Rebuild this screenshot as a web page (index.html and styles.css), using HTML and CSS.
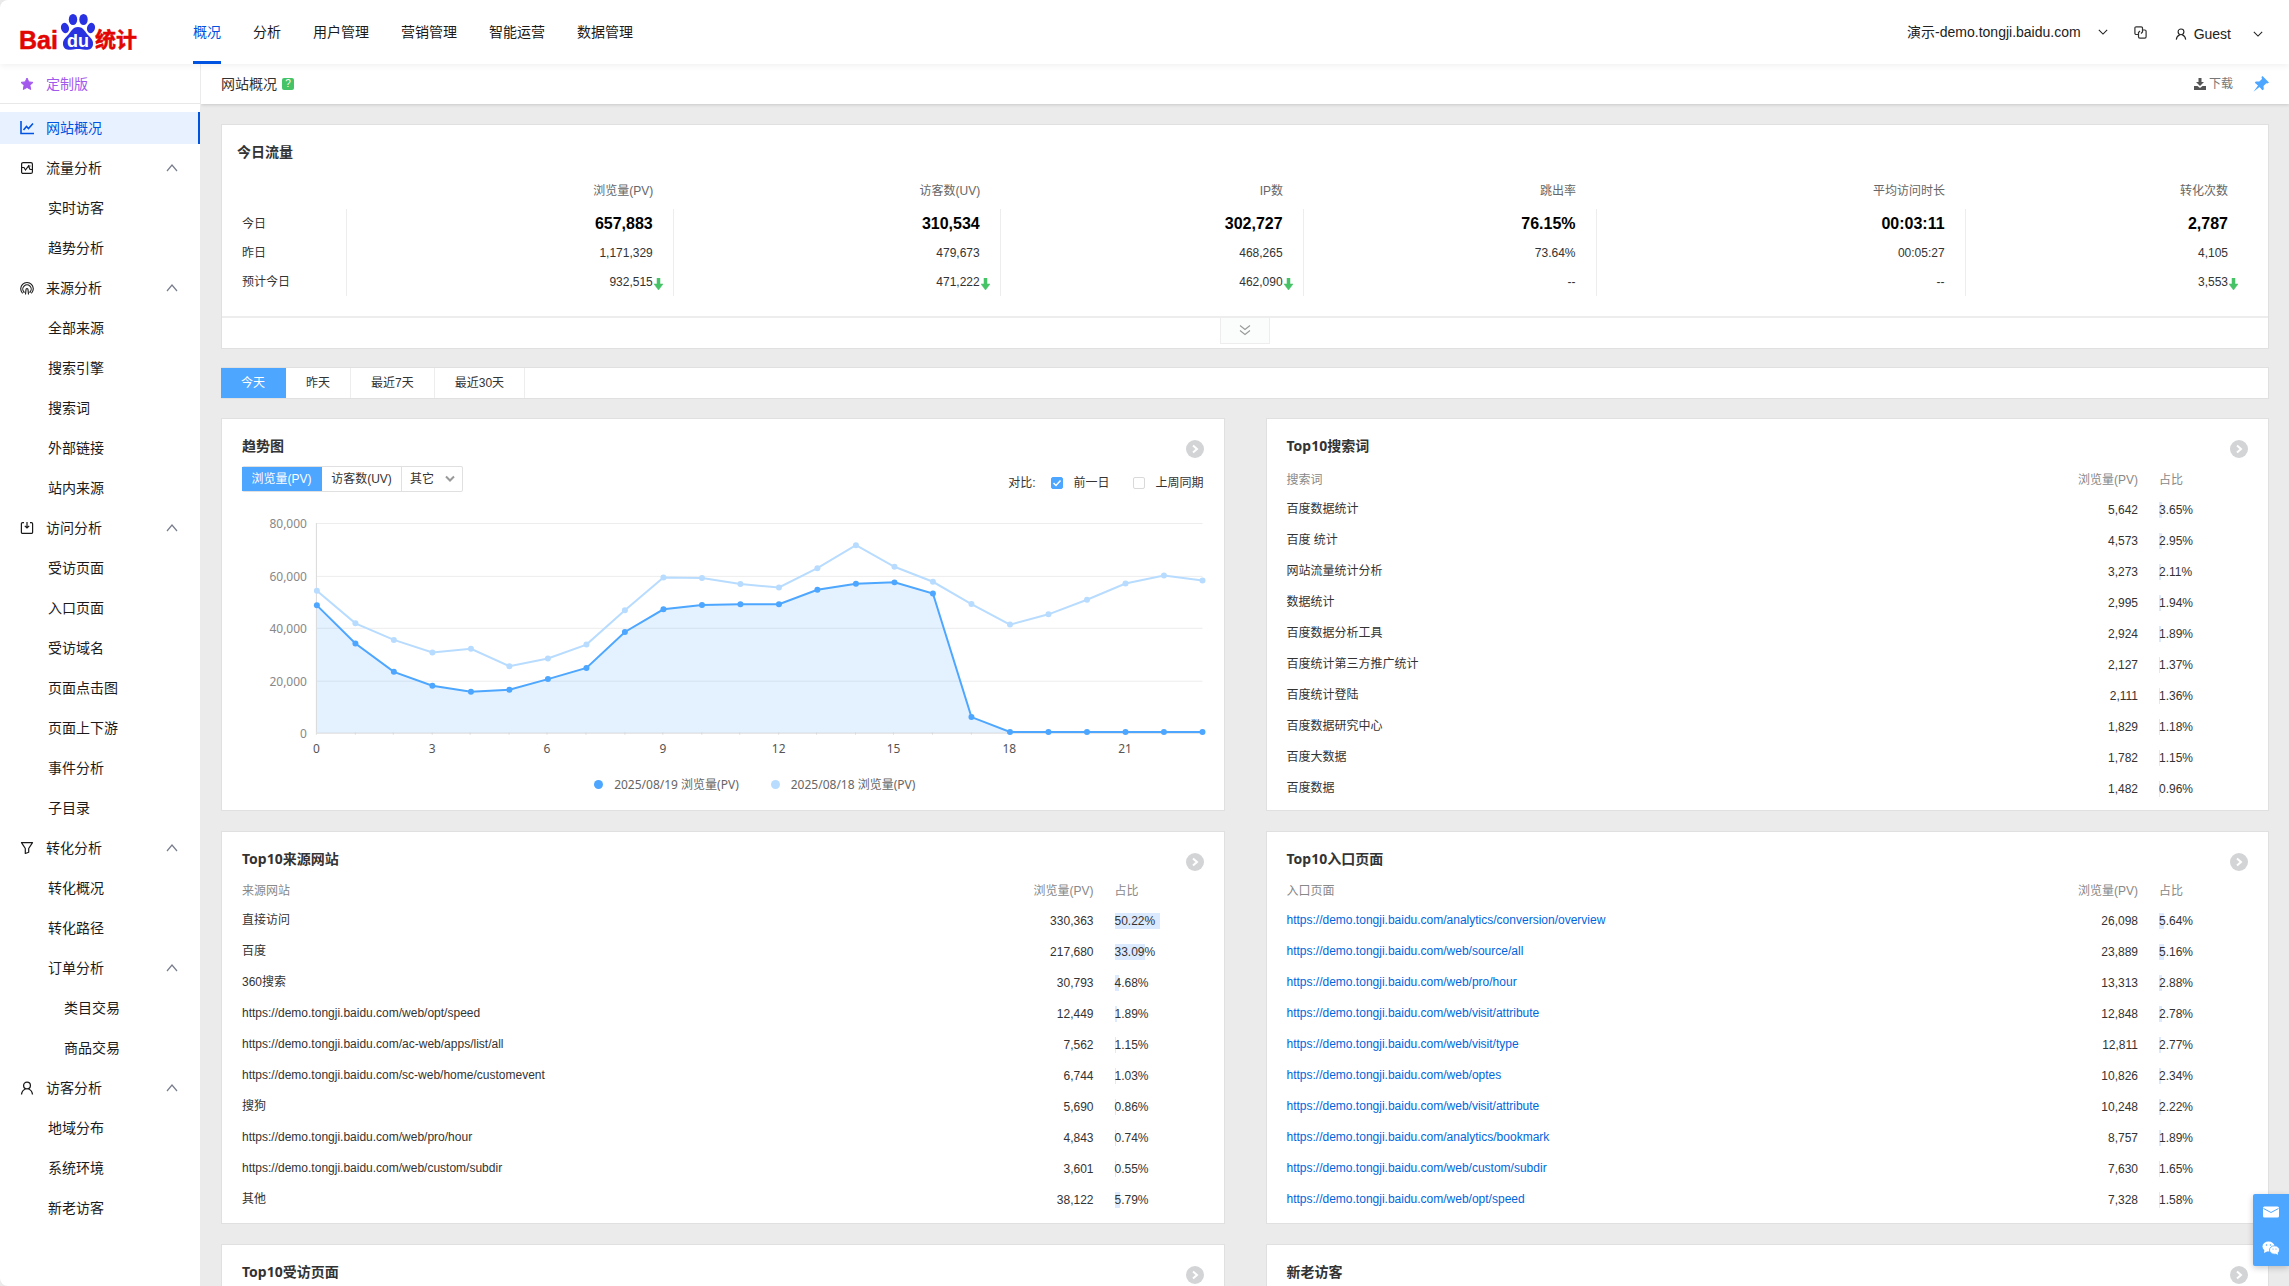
FILE: index.html
```html
<!DOCTYPE html>
<html lang="zh-CN">
<head>
  <meta charset="UTF-8">
  <meta name="viewport" content="width=device-width, initial-scale=1.0">
  <title>网站概况 - 百度统计</title>
  <link rel="stylesheet" href="styles.css">
</head>
<body>
  <!-- shared icons -->
  <svg class="sprite" aria-hidden="true">
    <symbol id="up" viewBox="0 0 12 12"><path d="M1 9l5-6 5 6" fill="none" stroke="currentColor" stroke-width="1.2"/></symbol>
    <symbol id="down" viewBox="0 0 12 12"><path d="M1 3.5l5 5 5-5" fill="none" stroke="currentColor" stroke-width="1.3"/></symbol>
    <symbol id="drop" viewBox="0 0 9 12"><path d="M3 0h3v6h3L4.500 12 0 6h3z" fill="#46c367" stroke="#46c367" stroke-linejoin="round" stroke-width=".5"/></symbol>
    <symbol id="user" viewBox="0 0 14 14"><g fill="none" stroke="currentColor" stroke-width="1.3"><circle cx="7" cy="4.500" r="3.400"/><path d="M1.500 13.500c.3-3 1.800-4.700 4-5.500M12.500 13.500c-.3-3-1.800-4.700-4-5.500"/></g></symbol>
    <symbol id="more" viewBox="0 0 18 18"><circle cx="9" cy="9" r="9" fill="#d3d4d6"/><path d="M7 5.500L11 9l-4 3.500" fill="none" stroke="#fff" stroke-width="2"/></symbol>
  </svg>

  <header class="header">
    <a class="logo" href="#" aria-label="百度统计">
      <svg viewBox="0 0 120 40" width="120" height="40">
        <text class="logo-red logo-bai" x="-1" y="37">Bai</text>
        <g fill="#2932e1">
          <ellipse cx="53" cy="7.500" rx="4.200" ry="5.500"/>
          <ellipse cx="63.500" cy="7.500" rx="4.200" ry="5.500"/>
          <ellipse cx="45" cy="16" rx="4" ry="5.200" transform="rotate(-15 45 16)"/>
          <ellipse cx="71" cy="16" rx="4" ry="5.200" transform="rotate(15 71 16)"/>
          <path d="M58 15c5.500 0 7 5 10.500 8.500 3 3 5 5.500 4.500 9-.6 4.500-4 5.500-8 5.200-3-.4-4.500-.7-7-.7s-4 .3-7 .7c-4 .3-7.400-.7-8-5.200-.5-3.500 1.500-6 4.500-9C51 20 52.500 15 58 15z"/>
        </g>
        <text class="logo-du" x="47" y="35">du</text>
        <text class="logo-red logo-cn" x="75" y="35">统计</text>
      </svg>
    </a>
    <nav class="nav">
      <a class="active" href="#">概况</a>
      <a href="#">分析</a>
      <a href="#">用户管理</a>
      <a href="#">营销管理</a>
      <a href="#">智能运营</a>
      <a href="#">数据管理</a>
    </nav>
    <div class="account">
      <button class="site" type="button">演示-demo.tongji.baidu.com <svg width="10" height="10"><use href="#down"/></svg></button>
      <button class="copy" type="button" aria-label="复制">
        <svg viewBox="0 0 13 13" width="13" height="13"><g fill="none" stroke="#333" stroke-width="1.200"><path d="M5 8.500H2.200A1.300 1.300 0 0 1 .9 7.200V2.100A1.300 1.300 0 0 1 2.200.8h5a1.300 1.300 0 0 1 1.300 1.300V6L7 7.500"/><path d="M8.500 4h2.300a1.300 1.300 0 0 1 1.300 1.300v5.500a1.300 1.300 0 0 1-1.300 1.300h-5a1.300 1.300 0 0 1-1.300-1.300V6.500L6 5"/></g></svg>
      </button>
      <button class="guest" type="button"><svg width="12" height="12"><use href="#user"/></svg><span>Guest</span><svg width="10" height="10"><use href="#down"/></svg></button>
    </div>
  </header>

  <div class="layout">
    <aside class="sidebar">
      <a class="custom" href="#">
        <svg viewBox="0 0 14 14" width="14" height="14"><path d="M7 1l1.800 3.900 4.200.5-3.100 2.900.8 4.200L7 10.400l-3.700 2.100.8-4.200L1 5.400l4.200-.5z" fill="#a259ec" stroke="#a259ec" stroke-linejoin="round"/></svg>
        定制版
      </a>
      <nav class="menu">
        <a class="item selected" href="#">
          <svg viewBox="0 0 14 14" width="14" height="14"><path d="M1 0v12.500h13M3.500 9l3-3.500 2 2 4.500-5" fill="none" stroke="currentColor" stroke-width="1.600"/></svg>
          网站概况
        </a>
        <a class="item" href="#">
          <svg viewBox="0 0 14 14" width="14" height="14"><g fill="none" stroke="currentColor" stroke-width="1.200"><rect x="1.600" y="1.600" width="10.800" height="10.800" rx="1.500"/><path d="M2 6.500h2L5.500 9l3-4 1.500 3.500h2"/><path d="M8 5h2.500"/></g></svg>
          流量分析 <svg class="fold" width="12" height="12"><use href="#up"/></svg>
        </a>
        <a class="item sub" href="#">实时访客</a>
        <a class="item sub" href="#">趋势分析</a>
        <a class="item" href="#">
          <svg viewBox="0 0 14 14" width="14" height="14"><g fill="none" stroke="currentColor" stroke-width="1.100"><path d="M2.600 12.300A6.300 6.300 0 1 1 11.400 12.300"/><path d="M4 12V11A4.200 4.200 0 1 1 10 11V12"/><path d="M5.500 13.500L6 8.500a1 1 0 0 1 2 0l.5 5"/></g></svg>
          来源分析 <svg class="fold" width="12" height="12"><use href="#up"/></svg>
        </a>
        <a class="item sub" href="#">全部来源</a>
        <a class="item sub" href="#">搜索引擎</a>
        <a class="item sub" href="#">搜索词</a>
        <a class="item sub" href="#">外部链接</a>
        <a class="item sub" href="#">站内来源</a>
        <a class="item" href="#">
          <svg viewBox="0 0 14 14" width="14" height="14"><g fill="none" stroke="currentColor" stroke-width="1.200"><path d="M4 1.600H2.600a1.200 1.200 0 0 0-1.200 1.200v8.400a1.200 1.200 0 0 0 1.200 1.200h8.800a1.200 1.200 0 0 0 1.200-1.200V2.800a1.200 1.200 0 0 0-1.200-1.200H10"/><path d="M7 1v6M4.800 4.800L7 7l2.200-2.200"/></g></svg>
          访问分析 <svg class="fold" width="12" height="12"><use href="#up"/></svg>
        </a>
        <a class="item sub" href="#">受访页面</a>
        <a class="item sub" href="#">入口页面</a>
        <a class="item sub" href="#">受访域名</a>
        <a class="item sub" href="#">页面点击图</a>
        <a class="item sub" href="#">页面上下游</a>
        <a class="item sub" href="#">事件分析</a>
        <a class="item sub" href="#">子目录</a>
        <a class="item" href="#">
          <svg viewBox="0 0 14 14" width="14" height="14"><path d="M1.500 1.600h11L8.700 7.500v3.800l-3.400 1.200v-5z" fill="none" stroke="currentColor" stroke-width="1.200" stroke-linejoin="round"/></svg>
          转化分析 <svg class="fold" width="12" height="12"><use href="#up"/></svg>
        </a>
        <a class="item sub" href="#">转化概况</a>
        <a class="item sub" href="#">转化路径</a>
        <a class="item sub" href="#">订单分析 <svg class="fold" width="12" height="12"><use href="#up"/></svg></a>
        <a class="item leaf" href="#">类目交易</a>
        <a class="item leaf" href="#">商品交易</a>
        <a class="item" href="#">
          <svg width="14" height="14"><use href="#user"/></svg>
          访客分析 <svg class="fold" width="12" height="12"><use href="#up"/></svg>
        </a>
        <a class="item sub" href="#">地域分布</a>
        <a class="item sub" href="#">系统环境</a>
        <a class="item sub" href="#">新老访客</a>
      </nav>
    </aside>

    <main class="main">
      <div class="page-bar">
        <h1>网站概况</h1>
        <span class="help">?</span>
        <button class="download" type="button">
          <svg viewBox="0 0 12 12" width="12" height="12"><path d="M4.500 0h3v4H10L6 8 2 4h2.500zM0 8h3.500L6 10 8.500 8H12v4H0z" fill="#555"/></svg>下载
        </button>
        <button class="pin" type="button" aria-label="固定">
          <svg viewBox="0 0 16 16" width="16" height="16"><path d="M9.500 0L16 6.500l-1.700 1-1-.2L10.500 10l.3 3.200-1.400 1L6.500 11 .5 15.800 5 9.500 1.800 6.800l1-1.400L6.300 5.600 9 3 8.500 1z" fill="#4da6ff"/></svg>
        </button>
      </div>

      <div class="content">
        <section class="summary">
          <h2>今日流量</h2>
          <table class="totals">
            <thead>
              <tr><th></th><th>浏览量(PV)</th><th>访客数(UV)</th><th>IP数</th><th>跳出率</th><th>平均访问时长</th><th>转化次数</th></tr>
            </thead>
            <tbody>
              <tr class="today"><th>今日</th><td>657,883</td><td>310,534</td><td>302,727</td><td>76.15%</td><td>00:03:11</td><td>2,787</td></tr>
              <tr><th>昨日</th><td>1,171,329</td><td>479,673</td><td>468,265</td><td>73.64%</td><td>00:05:27</td><td>4,105</td></tr>
              <tr>
                <th>预计今日</th>
                <td>932,515<svg class="drop" width="9" height="12"><use href="#drop"/></svg></td>
                <td>471,222<svg class="drop" width="9" height="12"><use href="#drop"/></svg></td>
                <td>462,090<svg class="drop" width="9" height="12"><use href="#drop"/></svg></td>
                <td>--</td>
                <td>--</td>
                <td>3,553<svg class="drop" width="9" height="12"><use href="#drop"/></svg></td>
              </tr>
            </tbody>
          </table>
          <div class="expand">
            <button type="button" aria-label="展开">
              <svg viewBox="0 0 12 12" width="12" height="12"><path d="M1 1.500l5 4 5-4M1 6.500l5 4 5-4" fill="none" stroke="#999" stroke-width="1.100"/></svg>
            </button>
          </div>
        </section>

        <div class="range">
          <button class="active" type="button">今天</button>
          <button type="button">昨天</button>
          <button type="button">最近7天</button>
          <button type="button">最近30天</button>
        </div>

        <div class="cards">
          <section class="card">
            <div class="card-head"><h2>趋势图</h2><a href="#" aria-label="更多"><svg width="18" height="18"><use href="#more"/></svg></a></div>
            <div class="tools">
              <div class="metrics">
                <button class="active" type="button">浏览量(PV)</button>
                <button type="button">访客数(UV)</button>
                <label class="other">
                  <select aria-label="其它指标"><option>其它</option></select>
                  <svg viewBox="0 0 10 8" width="10" height="8"><path d="M1 1.500l4 4 4-4" fill="none" stroke="#999" stroke-width="2"/></svg>
                </label>
              </div>
              <div class="compare">
                <span>对比:</span>
                <label><input type="checkbox" checked>前一日</label>
                <label><input type="checkbox">上周同期</label>
              </div>
            </div>
            <svg class="chart" id="chart" viewBox="0 0 963 250"></svg>
            <ul class="legend">
              <li>2025/08/19 浏览量(PV)</li>
              <li class="previous">2025/08/18 浏览量(PV)</li>
            </ul>
          </section>

          <section class="card">
            <div class="card-head"><h2>Top10搜索词</h2><a href="#" aria-label="更多"><svg width="18" height="18"><use href="#more"/></svg></a></div>
            <table class="top words">
              <thead><tr><th>搜索词</th><th>浏览量(PV)</th><th>占比</th></tr></thead>
              <tbody>
                <tr><td>百度数据统计</td><td>5,642</td><td>3.65%</td></tr>
                <tr><td>百度 统计</td><td>4,573</td><td>2.95%</td></tr>
                <tr><td>网站流量统计分析</td><td>3,273</td><td>2.11%</td></tr>
                <tr><td>数据统计</td><td>2,995</td><td>1.94%</td></tr>
                <tr><td>百度数据分析工具</td><td>2,924</td><td>1.89%</td></tr>
                <tr><td>百度统计第三方推广统计</td><td>2,127</td><td>1.37%</td></tr>
                <tr><td>百度统计登陆</td><td>2,111</td><td>1.36%</td></tr>
                <tr><td>百度数据研究中心</td><td>1,829</td><td>1.18%</td></tr>
                <tr><td>百度大数据</td><td>1,782</td><td>1.15%</td></tr>
                <tr><td>百度数据</td><td>1,482</td><td>0.96%</td></tr>
              </tbody>
            </table>
          </section>

          <section class="card">
            <div class="card-head"><h2>Top10来源网站</h2><a href="#" aria-label="更多"><svg width="18" height="18"><use href="#more"/></svg></a></div>
            <table class="top">
              <thead><tr><th>来源网站</th><th>浏览量(PV)</th><th>占比</th></tr></thead>
              <tbody>
                <tr><td>直接访问</td><td>330,363</td><td>50.22%</td></tr>
                <tr><td>百度</td><td>217,680</td><td>33.09%</td></tr>
                <tr><td>360搜索</td><td>30,793</td><td>4.68%</td></tr>
                <tr><td>https://demo.tongji.baidu.com/web/opt/speed</td><td>12,449</td><td>1.89%</td></tr>
                <tr><td>https://demo.tongji.baidu.com/ac-web/apps/list/all</td><td>7,562</td><td>1.15%</td></tr>
                <tr><td>https://demo.tongji.baidu.com/sc-web/home/customevent</td><td>6,744</td><td>1.03%</td></tr>
                <tr><td>搜狗</td><td>5,690</td><td>0.86%</td></tr>
                <tr><td>https://demo.tongji.baidu.com/web/pro/hour</td><td>4,843</td><td>0.74%</td></tr>
                <tr><td>https://demo.tongji.baidu.com/web/custom/subdir</td><td>3,601</td><td>0.55%</td></tr>
                <tr><td>其他</td><td>38,122</td><td>5.79%</td></tr>
              </tbody>
            </table>
          </section>

          <section class="card">
            <div class="card-head"><h2>Top10入口页面</h2><a href="#" aria-label="更多"><svg width="18" height="18"><use href="#more"/></svg></a></div>
            <table class="top">
              <thead><tr><th>入口页面</th><th>浏览量(PV)</th><th>占比</th></tr></thead>
              <tbody>
                <tr><td><a href="#">https://demo.tongji.baidu.com/analytics/conversion/overview</a></td><td>26,098</td><td>5.64%</td></tr>
                <tr><td><a href="#">https://demo.tongji.baidu.com/web/source/all</a></td><td>23,889</td><td>5.16%</td></tr>
                <tr><td><a href="#">https://demo.tongji.baidu.com/web/pro/hour</a></td><td>13,313</td><td>2.88%</td></tr>
                <tr><td><a href="#">https://demo.tongji.baidu.com/web/visit/attribute</a></td><td>12,848</td><td>2.78%</td></tr>
                <tr><td><a href="#">https://demo.tongji.baidu.com/web/visit/type</a></td><td>12,811</td><td>2.77%</td></tr>
                <tr><td><a href="#">https://demo.tongji.baidu.com/web/optes</a></td><td>10,826</td><td>2.34%</td></tr>
                <tr><td><a href="#">https://demo.tongji.baidu.com/web/visit/attribute</a></td><td>10,248</td><td>2.22%</td></tr>
                <tr><td><a href="#">https://demo.tongji.baidu.com/analytics/bookmark</a></td><td>8,757</td><td>1.89%</td></tr>
                <tr><td><a href="#">https://demo.tongji.baidu.com/web/custom/subdir</a></td><td>7,630</td><td>1.65%</td></tr>
                <tr><td><a href="#">https://demo.tongji.baidu.com/web/opt/speed</a></td><td>7,328</td><td>1.58%</td></tr>
              </tbody>
            </table>
          </section>

          <section class="card">
            <div class="card-head"><h2>Top10受访页面</h2><a href="#" aria-label="更多"><svg width="18" height="18"><use href="#more"/></svg></a></div>
          </section>

          <section class="card">
            <div class="card-head"><h2>新老访客</h2><a href="#" aria-label="更多"><svg width="18" height="18"><use href="#more"/></svg></a></div>
          </section>
        </div>
      </div>
    </main>
  </div>

  <div class="contact">
    <button type="button" aria-label="邮件">
      <svg viewBox="0 0 16 12" width="16" height="12"><rect width="16" height="11" y=".5" rx="1.500" fill="#fff"/><path d="M.5 2.500L8 6.500l7.500-4" fill="none" stroke="#4da6ff"/></svg>
    </button>
    <button type="button" aria-label="微信">
      <svg viewBox="0 0 18 14" width="18" height="14"><g fill="#fff"><ellipse cx="6.500" cy="5.500" rx="6" ry="5"/><path d="M2.500 8L2 12l4-2z"/><ellipse cx="12.500" cy="9" rx="5" ry="4.200" stroke="#4da6ff" stroke-width=".8"/><path d="M13 12l3 2-.5-3z"/></g><g fill="#4da6ff"><circle cx="4.500" cy="4" r=".8"/><circle cx="8.500" cy="4" r=".8"/><circle cx="11" cy="8" r=".6"/><circle cx="14" cy="8" r=".6"/></g></svg>
    </button>
  </div>

  <script src="script.js"></script>
</body>
</html>
```
FILE: styles.css
```css
* {
  margin: 0;
  padding: 0;
  box-sizing: border-box;
}

body {
  display: flex;
  flex-direction: column;
  height: 100vh;
  overflow: hidden;
  background: #ebebeb;
  color: #333;
  font-family: "Liberation Sans", "Noto Sans CJK SC", sans-serif;
  font-size: 12px;
  line-height: 20px;
}

a {
  color: inherit;
  text-decoration: none;
}

button,
select {
  border: 0;
  background: none;
  color: inherit;
  font: inherit;
  cursor: pointer;
}

svg {
  flex: none;
}

.sprite {
  position: absolute;
  width: 0;
  height: 0;
}

/* header */
.header {
  display: flex;
  align-items: center;
  flex: none;
  height: 64px;
  padding: 0 26px 0 20px;
  background: #fff;
  border-radius: 8px 0 0;
  box-shadow: 0 2px 6px rgba(0, 0, 0, 0.06);
  z-index: 2;
}

.logo {
  width: 173px;
  height: 40px;
}

.logo svg {
  overflow: visible;
}

.logo-red {
  fill: #e10601;
  stroke: #e10601;
  stroke-width: 0.5;
  font-weight: 700;
}

.logo-bai {
  font-size: 25px;
}

.logo-cn {
  font-family: "Noto Sans CJK SC", sans-serif;
  font-size: 21px;
}

.logo-du {
  fill: #fff;
  font-size: 18px;
  font-weight: 700;
}

.nav {
  display: flex;
  gap: 32px;
}

.nav a {
  height: 64px;
  border-bottom: 3px solid transparent;
  color: #1a1a1a;
  font-size: 14px;
  line-height: 64px;
}

.nav .active {
  border-color: #0052e0;
  color: #0052e0;
}

.account {
  display: flex;
  align-items: center;
  margin-left: auto;
  color: #222;
  font-size: 14px;
}

.account button {
  display: flex;
  align-items: center;
}

.account .site {
  gap: 17px;
  margin-right: 26px;
}

.account .copy {
  margin-right: 28px;
}

.account .guest {
  gap: 7px;
  padding-top: 4px;
}

.guest span {
  margin-right: 15px;
}

.layout {
  display: flex;
  flex: 1;
  min-height: 0;
}

/* sidebar */
.sidebar {
  flex: none;
  width: 201px;
  overflow: hidden;
  background: #fff;
  border-right: 1px solid #ebebeb;
  border-radius: 0 0 0 8px;
  font-size: 14px;
}

.custom {
  display: flex;
  align-items: center;
  gap: 12px;
  height: 40px;
  padding-left: 20px;
  border-bottom: 1px solid #e8e8e8;
  color: #a259ec;
}

.menu {
  display: flex;
  flex-direction: column;
  gap: 8px;
  padding-top: 8px;
}

.item {
  display: flex;
  align-items: center;
  gap: 12px;
  height: 32px;
  padding: 0 20px;
  border-right: 2px solid transparent;
  color: #1a1a1a;
}

.item.selected {
  background: #e8f1ff;
  border-color: #0052e0;
  color: #0052e0;
}

.item.sub {
  padding-left: 48px;
}

.item.leaf {
  padding-left: 64px;
}

.fold {
  margin-left: auto;
  color: #777e8c;
}

/* page bar */
.main {
  flex: 1;
  min-width: 0;
  overflow: hidden;
}

.page-bar {
  display: flex;
  align-items: center;
  height: 40px;
  padding: 0 20px;
  background: #fff;
  box-shadow: 0 1px 3px rgba(0, 0, 0, 0.15);
}

.page-bar h1 {
  font-size: 14px;
  font-weight: 400;
}

.help {
  width: 12px;
  height: 12px;
  margin-left: 5px;
  border-radius: 2px;
  background: #46c367;
  color: #fff;
  font-size: 10px;
  line-height: 12px;
  text-align: center;
}

.download {
  display: flex;
  align-items: center;
  gap: 3px;
  margin-left: auto;
  color: #777;
}

.pin {
  display: flex;
  margin-left: 20px;
}

.content {
  padding: 20px;
}

/* today's totals */
.summary {
  margin-bottom: 18px;
  background: #fff;
  border: 1px solid #e0e0e0;
}

.summary h2 {
  padding: 17px 15px 0;
  font-size: 14px;
}

.totals {
  width: calc(100% - 40px);
  margin: 18px 20px 20px;
  border-collapse: collapse;
  table-layout: fixed;
}

.totals th,
.totals td {
  height: 29px;
  padding-right: 20px;
  border-right: 1px solid #ededed;
  font-weight: 400;
  text-align: right;
}

.totals thead th {
  padding-bottom: 7px;
  border: 0;
  color: #666;
}

.totals tbody th {
  text-align: left;
}

.totals tr > :last-child {
  border-right: 0;
}

.totals .today td {
  color: #000;
  font-size: 16px;
  font-weight: 700;
}

.totals th:nth-child(1) { width: 5.2%; }
.totals th:nth-child(2) { width: 16.3%; }
.totals th:nth-child(3) { width: 16.3%; }
.totals th:nth-child(4) { width: 15.1%; }
.totals th:nth-child(5) { width: 14.6%; }
.totals th:nth-child(6) { width: 18.4%; }
.totals th:nth-child(7) { width: 14.1%; }

.drop {
  margin: 0 -10px 0 1px;
  vertical-align: -4px;
}

.expand {
  display: flex;
  justify-content: center;
  height: 32px;
  border-top: 2px solid #ededed;
}

.expand button {
  width: 50px;
  height: 26px;
  border: 1px solid #ededed;
  border-top: 0;
  background: #fbfcfc;
  line-height: 1;
}

/* date range */
.range {
  display: flex;
  margin-bottom: 19px;
  background: #fff;
  border: 1px solid #e0e0e0;
  border-left: 0;
}

.range button {
  height: 30px;
  padding: 0 20px;
  border-right: 1px solid #ededed;
}

.range .active {
  border-color: #4da6ff;
  background: #4da6ff;
  color: #fff;
}

/* cards */
.cards {
  display: grid;
  grid-template-columns: 1fr 1fr;
  grid-auto-rows: 393px;
  gap: 20px 41px;
}

.card {
  padding: 17px 20px;
  background: #fff;
  border: 1px solid #e0e0e0;
}

.card-head {
  display: flex;
  justify-content: space-between;
  height: 22px;
}

.card-head a {
  display: flex;
  align-items: flex-end;
}

.card-head h2 {
  font-family: "Noto Sans", "Noto Sans CJK SC", sans-serif;
  font-size: 14px;
}

.tools {
  display: flex;
  justify-content: space-between;
  align-items: center;
  height: 42px;
}

.metrics {
  display: flex;
  border: 1px solid #e0e0e0;
  border-left: 0;
  border-radius: 2px;
}

.metrics button {
  width: 80px;
  height: 24px;
  border-right: 1px solid #e0e0e0;
}

.metrics .active {
  border-color: #4da6ff;
  background: #4da6ff;
  color: #fff;
}

.other {
  display: flex;
  align-items: center;
  padding: 0 7px 0 8px;
}

.other select {
  width: 35px;
  appearance: none;
}

.compare {
  display: flex;
  align-items: center;
  padding-top: 8px;
}

.compare label {
  display: flex;
  align-items: center;
  gap: 10px;
  margin-left: 24px;
}

.compare span + label {
  margin-left: 16px;
}

.compare input {
  width: 12px;
  height: 12px;
  border: 1px solid #d9d9d9;
  border-radius: 2px;
  appearance: none;
}

.compare input:checked {
  border-color: #4da6ff;
  background: #4da6ff url("data:image/svg+xml,%3Csvg xmlns='http://www.w3.org/2000/svg' viewBox='0 0 10 10'%3E%3Cpath d='M1.500 5l2.500 2.500 4.500-5' fill='none' stroke='%23fff' stroke-width='1.500'/%3E%3C/svg%3E");
}

.chart {
  display: block;
  width: 100%;
  overflow: visible;
  font-family: "Noto Sans", "Noto Sans CJK SC", sans-serif;
}

.chart .grid {
  stroke: #ededed;
}

.chart .axis {
  stroke: #d9d9d9;
}

.chart .value {
  fill: #888;
  text-anchor: end;
}

.chart .hour {
  fill: #555;
  text-anchor: middle;
}

.chart .area {
  fill: #4da6ff;
  opacity: 0.15;
}

.chart .line {
  fill: none;
  stroke-width: 2;
}

.chart .now .line { stroke: #4da6ff; }
.chart .now circle { fill: #4da6ff; }
.chart .before .line { stroke: #b8dcff; }
.chart .before circle { fill: #b8dcff; }

.legend {
  display: flex;
  justify-content: center;
  gap: 32px;
  margin-top: 25px;
  padding-left: 64px;
  color: #666;
  font-family: "Noto Sans", "Noto Sans CJK SC", sans-serif;
  list-style: none;
}

.legend li::before {
  content: "";
  display: inline-block;
  width: 9px;
  height: 9px;
  margin-right: 11px;
  border-radius: 50%;
  background: #4da6ff;
}

.legend .previous::before {
  background: #b8dcff;
}

/* top 10 tables */
.top {
  width: 100%;
  margin-top: 10px;
  border-collapse: collapse;
}

.top.words {
  margin-top: 12px;
}

.top th {
  height: 23px;
  padding-bottom: 3px;
  color: #888;
  font-weight: 400;
  text-align: left;
}

.top td {
  height: 31px;
}

.top th:nth-child(2),
.top td:nth-child(2) {
  width: 100px;
  text-align: right;
}

.top th:nth-child(3),
.top td:nth-child(3) {
  width: 110px;
  padding-left: 21px;
}

.top td:nth-child(n + 2) {
  padding-top: 3px;
}

.top a {
  color: #0066dd;
}

.bar {
  display: block;
  height: 16px;
  background: #dbeaff;
  line-height: 16px;
  white-space: nowrap;
}

/* contact buttons on the right edge */
.contact {
  position: fixed;
  right: 0;
  bottom: 20px;
  display: flex;
  flex-direction: column;
  border-radius: 2px 0 0 2px;
  background: #4da6ff;
  box-shadow: 0 2px 6px rgba(0, 0, 0, 0.2);
}

.contact button {
  display: flex;
  align-items: center;
  justify-content: center;
  width: 36px;
  height: 36px;
}
```
FILE: script.js
```js
const today = [48560, 33980, 23200, 17880, 15600, 16360, 20400, 24700, 38400, 47050, 48700, 48950, 49000, 54500, 56800, 57350, 53100, 5960, 250, 250, 250, 250, 250, 250];
const yesterday = [54150, 41700, 35400, 30560, 31950, 25360, 28280, 33600, 46660, 59200, 58960, 56700, 55400, 62760, 71500, 63270, 57560, 49070, 41200, 45140, 50700, 56930, 59970, 58070];

const left = 75;
const right = 962;
const top0 = 23;
const bottom = 233;

function x(hour) {
  return left + hour * (right - left) / 23;
}

function y(value) {
  return bottom - value / 80000 * (bottom - top0);
}

function drawSeries(name, values, filled) {
  const points = values.map((v, i) => `${x(i).toFixed(1)},${y(v).toFixed(1)}`).join(' ');
  let out = `<g class="${name}">`;
  if (filled) {
    out += `<polygon class="area" points="${left},${bottom} ${points} ${right},${bottom}"/>`;
  }
  out += `<polyline class="line" points="${points}"/>`;
  values.forEach((v, i) => {
    out += `<circle cx="${x(i).toFixed(1)}" cy="${y(v).toFixed(1)}" r="3"/>`;
  });
  return out + '</g>';
}

function drawChart() {
  let out = '';
  for (let v = 0; v <= 80000; v += 20000) {
    const line = Math.round(y(v)) + 0.5;
    out += `<line class="${v ? 'grid' : 'axis'}" x1="${left}" x2="${right}" y1="${line}" y2="${line}"/>`;
    out += `<text class="value" x="${left - 10}" y="${line + 5}">${v.toLocaleString('en-US')}</text>`;
  }
  out += `<line class="axis" x1="${left - 0.5}" x2="${left - 0.5}" y1="${top0}" y2="${bottom}"/>`;
  for (let h = 0; h < 24; h++) {
    const tick = Math.round(x(h)) - 0.5;
    out += `<line class="axis" x1="${tick}" x2="${tick}" y1="${bottom}" y2="${bottom + 2}"/>`;
    if (h % 3 === 0) {
      out += `<text class="hour" x="${tick}" y="${bottom + 20}">${h}</text>`;
    }
  }
  out += drawSeries('before', yesterday, false);
  out += drawSeries('now', today, true);
  document.getElementById('chart').innerHTML = out;
}

// share bar behind each percentage, 90px for 100%
document.querySelectorAll('.top tbody td:last-child').forEach(cell => {
  const share = parseFloat(cell.textContent);
  cell.innerHTML = `<span class="bar" style="width:${Math.max(1, Math.round(share * 0.9))}px">${cell.textContent}</span>`;
});

drawChart();
```
